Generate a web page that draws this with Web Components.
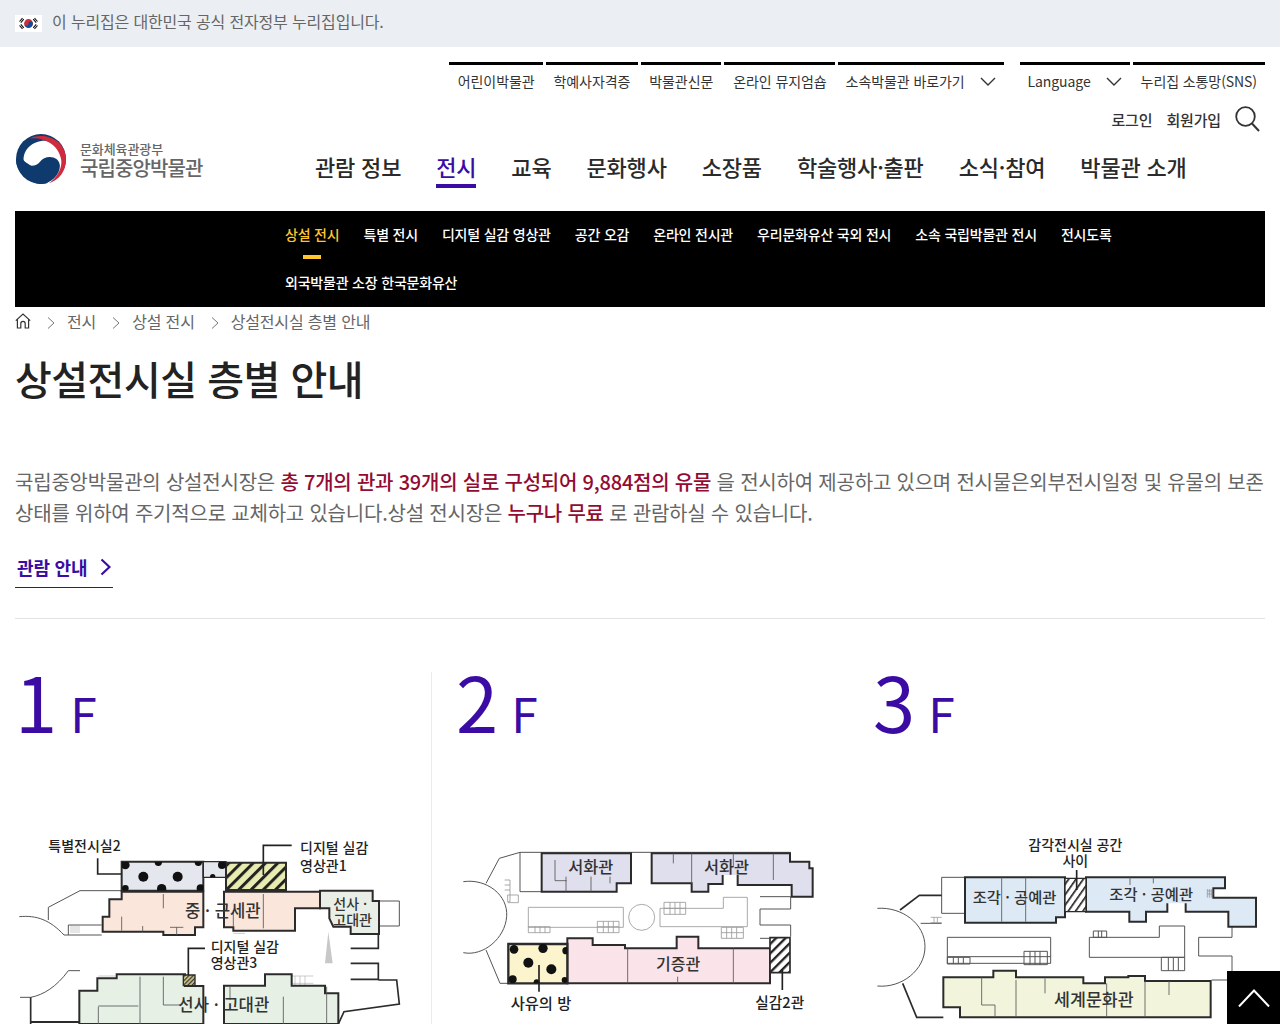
<!DOCTYPE html>
<html lang="ko">
<head>
<meta charset="utf-8">
<title>상설전시실 층별 안내</title>
<style>
  html, body { margin: 0; padding: 0; background: #fff; }
  body { font-family: "Noto Sans CJK KR", "Noto Sans", sans-serif; color: #333; height: 1024px; overflow: hidden; }
</style>
</head>
<body>
<gov-banner>이 누리집은 대한민국 공식 전자정부 누리집입니다.</gov-banner>
<site-header></site-header>
<sub-nav></sub-nav>
<bread-crumb></bread-crumb>
<page-intro></page-intro>
<floor-list></floor-list>
<top-button></top-button>

<script>
const FONT = '"Noto Sans CJK KR", "Noto Sans", sans-serif';
const PURPLE = '#3a0ca3';

class GovBanner extends HTMLElement {
  constructor() {
    super();
    this.attachShadow({ mode: 'open' });
    this.shadowRoot.innerHTML = `
      <style>
        :host { display: flex; align-items: center; gap: 10px; height: 47px; padding: 0 15px; box-sizing: border-box;
          background: #ebeff3; color: #666; font: 16px/1 ${FONT}; letter-spacing: -.16px; }
        svg { display: block; }
        span { padding-bottom: 6px; }
      </style>
      <svg width="27" height="17" viewBox="0 0 27 17">
        <rect width="27" height="17" fill="#fff"/>
        <circle cx="13.5" cy="8.5" r="4.4" fill="#cd2e3a"/>
        <path d="M9.1 8.5a2.2 2.2 0 0 0 4.4 0a2.2 2.2 0 0 1 4.4 0a4.4 4.4 0 0 1-8.8 0z" fill="#0f4c9c"/>
        <g stroke="#111" stroke-width="1.1" fill="none">
          <path d="M4.5 6.5l3-3.4M5.8 7.6l3-3.4"/>
          <path d="M18.2 4.2l3 3.4M19.5 3.1l3 3.4"/>
          <path d="M4.5 10.5l3 3.4M5.8 9.4l3 3.4"/>
          <path d="M18.2 12.8l3-3.4M19.5 13.9l3-3.4"/>
        </g>
      </svg>
      <span><slot></slot></span>`;
  }
}

class SiteHeader extends HTMLElement {
  constructor() {
    super();
    this.attachShadow({ mode: 'open' });
    const chevron = '<svg class="chev" width="16" height="9" viewBox="0 0 16 9"><path d="M1 1l7 7 7-7" fill="none" stroke="#333" stroke-width="1.4"/></svg>';
    const nav = ['관람 정보', '전시', '교육', '문화행사', '소장품', '학술행사·출판', '소식·참여', '박물관 소개'];
    this.shadowRoot.innerHTML = `
      <style>
        :host { display: block; padding: 0 15px; font-family: ${FONT}; color: #333; }
        .util { display: flex; justify-content: flex-end; gap: 16px; padding-top: 15px; }
        .group { display: flex; gap: 3px; }
        .group a { display: flex; align-items: center; gap: 15px; box-sizing: border-box; height: 38px; padding: 0 8px 3px;
          border-top: 3px solid #000; font-size: 14px; letter-spacing: -.09px; white-space: nowrap; }
        .group a.first { padding-left: 9px; }
        .chev { display: block; }
        .member { display: flex; justify-content: flex-end; align-items: center; height: 35px; padding: 3px 5px 0 0; box-sizing: border-box; font-size: 15px; font-weight: 500; letter-spacing: -.15px; gap: 14px; }
        .member svg { display: block; }
        .bar { display: flex; height: 76px; }
        .logo { display: flex; gap: 13px; width: 300px; height: 50px; }
        .logo svg { display: block; flex: none; margin-top: -1px; }
        .logo div { padding-top: 6px; color: #666; font-weight: 500; white-space: nowrap; }
        .logo b { display: block; font-size: 13px; line-height: 15px; font-weight: 500; letter-spacing: -.1px; }
        .logo strong { display: block; font-size: 20px; line-height: 23px; font-weight: 500; letter-spacing: -.9px; }
        nav { display: flex; gap: 35px; }
        nav a { box-sizing: border-box; height: 53px; padding-top: 15px; font-size: 22px; line-height: 32px; font-weight: 500; letter-spacing: -.18px; white-space: nowrap; color: #2a2a2a; }
        nav a.on { color: ${PURPLE}; border-bottom: 4px solid ${PURPLE}; }
      </style>
      <div class="util">
        <div class="group">
          <a class="first">어린이박물관</a><a>학예사자격증</a><a>박물관신문</a><a class="first">온라인 뮤지엄숍</a><a>소속박물관 바로가기 ${chevron}</a>
        </div>
        <div class="group">
          <a>Language ${chevron}</a><a>누리집 소통망(SNS)</a>
        </div>
      </div>
      <div class="member">
        <span>로그인</span><span>회원가입</span>
        <svg width="25" height="26" viewBox="0 0 25 26"><circle cx="10.5" cy="10.5" r="9.3" fill="none" stroke="#333" stroke-width="1.8"/><path d="M17 17.5l7 7.5" stroke="#333" stroke-width="2" fill="none"/></svg>
      </div>
      <div class="bar">
        <div class="logo">
          <svg width="52" height="50" viewBox="0 0 150 148">
            <circle cx="75" cy="74" r="74" fill="#0f3a6d"/>
            <path d="M24 80C20 48 50 20 85 20C120 22 142 55 138 90C134 120 112 138 96 146L70 110Z" fill="#fff"/>
            <path d="M42 13C80-6 150 12 149 78C148 110 130 135 100 146C124 126 140 100 134 72C126 32 84 8 42 13Z" fill="#d02a3e"/>
            <path d="M24 78C34 100 60 98 72 82C86 62 128 62 131 94C131 122 104 146 76 148C50 148 0 120 1 74Z" fill="#0f3a6d"/>
          </svg>
          <div><b>문화체육관광부</b><strong>국립중앙박물관</strong></div>
        </div>
        <nav>${nav.map((t, i) => `<a class="${i === 1 ? 'on' : ''}">${t}</a>`).join('')}</nav>
      </div>`;
  }
}

class SubNav extends HTMLElement {
  constructor() {
    super();
    this.attachShadow({ mode: 'open' });
    const items = ['상설 전시', '특별 전시', '디지털 실감 영상관', '공간 오감', '온라인 전시관', '우리문화유산 국외 전시', '소속 국립박물관 전시', '전시도록', '외국박물관 소장 한국문화유산'];
    this.shadowRoot.innerHTML = `
      <style>
        :host { display: block; margin: 0 15px; background: #000; font-family: ${FONT}; }
        ul { display: flex; flex-wrap: wrap; margin: 0; padding: 0 100px 0 258px; list-style: none; }
        li { position: relative; height: 48px; padding: 0 12px; color: #fff; font-size: 14px; font-weight: 500; letter-spacing: -.2px; line-height: 46px; white-space: nowrap; }
        li.on { color: #ffc72c; }
        li.on::after { content: ""; position: absolute; left: 50%; bottom: 0; width: 18px; height: 4px; margin-left: -9px; background: #ffc72c; }
      </style>
      <ul>${items.map((t, i) => `<li class="${i === 0 ? 'on' : ''}">${t}</li>`).join('')}</ul>`;
  }
}

class BreadCrumb extends HTMLElement {
  constructor() {
    super();
    this.attachShadow({ mode: 'open' });
    const sep = '<svg class="sep" width="8" height="14" viewBox="0 0 8 14"><path d="M1 1.5l6 5.5-6 5.5" fill="none" stroke="#777" stroke-width="1"/></svg>';
    this.shadowRoot.innerHTML = `
      <style>
        :host { display: flex; align-items: center; box-sizing: border-box; height: 30px; padding: 0 15px 2px; color: #666; font: 16px/28px ${FONT}; letter-spacing: -.16px; }
        svg { display: block; flex: none; }
        .sep { margin: 4px 12px 0 16px; }
      </style>
      <svg width="16" height="16" viewBox="0 0 16 16"><path d="M.8 7.6L8 1l7.2 6.6M2.4 6.4V15h3.4v-4.4a2.2 2.2 0 0 1 4.4 0V15h3.4V6.4" fill="none" stroke="#333" stroke-width="1.2"/></svg>
      ${sep}<span>전시</span>${sep}<span>상설 전시</span>${sep}<span>상설전시실 층별 안내</span>`;
  }
}

class PageIntro extends HTMLElement {
  constructor() {
    super();
    this.attachShadow({ mode: 'open' });
    this.shadowRoot.innerHTML = `
      <style>
        :host { display: block; margin: 0 15px; font-family: ${FONT}; border-bottom: 1px solid #e2e2e2; }
        h1 { margin: 0; padding-top: 11px; font-size: 40px; line-height: 60px; font-weight: 500; letter-spacing: -.5px; color: #222; }
        p { margin: 0; padding-top: 58px; font-size: 20px; line-height: 31px; letter-spacing: -.21px; color: #666; }
        strong { color: #930b30; font-weight: 500; letter-spacing: -.22px; }
        a { display: inline-flex; align-items: center; gap: 13px; box-sizing: border-box; width: 98px; height: 40px; margin-top: 20px; padding: 0 0 2px 2px; margin-bottom: 30px;
          border-bottom: 1px solid ${PURPLE}; color: ${PURPLE}; font-size: 18px; font-weight: 700; letter-spacing: -.18px; white-space: nowrap; }
        .wrap { display: block; }
        svg { display: block; flex: none; }
      </style>
      <h1>상설전시실 층별 안내</h1>
      <p>국립중앙박물관의 상설전시장은 <strong>총 7개의 관과 39개의 실로 구성되어 9,884점의 유물</strong> 을 전시하여 제공하고 있으며 전시물은외부전시일정 및 유물의 보존 상태를 위하여 주기적으로 교체하고 있습니다.상설 전시장은 <strong>누구나 무료</strong> 로 관람하실 수 있습니다.</p>
      <span class="wrap"><a>관람 안내 <svg width="11" height="18" viewBox="0 0 11 18"><path d="M1.5 1.5L9.5 9l-8 7.5" fill="none" stroke="${PURPLE}" stroke-width="2.2"/></svg></a></span>`;
  }
}

// floor plans, coordinates follow the reference at 3x
const INK = '#2b2b2b';
const PLANS = {
  1: { box: '45 0 1248 612', body: `
    <defs>
      <pattern id="h1" width="26" height="26" patternUnits="userSpaceOnUse" patternTransform="rotate(45)"><rect width="26" height="26" fill="#e8ecb0"/><rect width="9" height="26" fill="#222"/></pattern>
      <pattern id="h3" width="9" height="9" patternUnits="userSpaceOnUse" patternTransform="rotate(45)"><rect width="9" height="9" fill="#d9cf8e"/><rect width="4" height="9" fill="#333"/></pattern>
      <clipPath id="rooms"><rect x="365" y="125" width="245" height="87"/><rect x="610" y="125" width="68" height="47"/></clipPath>
    </defs>
    <g fill="none" stroke="#555" stroke-width="3">
      <path d="M58 290C110 285 150 300 192 345H305"/><path d="M145 300V262L240 212H365"/><path d="M205 315H305M205 345V315"/>
      <path d="M92 532H60M92 532C130 525 170 500 205 452H240"/>
      <path d="M1137 243H1198V318H1137"/>
    </g>
    <g fill="none" stroke="${INK}" stroke-width="5">
      <path d="M92 532V612M1052 385H1135V342M1052 430H1135V478H1052M1135 480H1190L1198 552L1032 575L1015 612"/>
    </g>
    <g stroke="#999" stroke-width="1.5" fill="none"><path d="M210 318H240M210 324H240M210 330H240M210 336H240"/><path d="M700 340H735"/><path d="M295 468H345M875 468H940M875 490H940M885 468V495M900 468V495M915 468V495"/></g>
    <path d="M985 335L975 430H998Z" fill="#c8c8c8"/>
    <g stroke="${INK}" stroke-width="6" stroke-linejoin="miter">
      <path d="M365 125H610V212H365Z" fill="#e4e7ee"/>
      <path d="M610 125H678V172H610Z" fill="#e4e7ee" stroke-width="4"/>
      <path d="M678 128H858V210H678Z" fill="url(#h1)"/>
      <path d="M365 215H610V322H585V345H490V335H308V290H328V238H365Z" fill="#fbe6db"/>
      <path d="M672 215H960V265H885V332H700V322H672Z" fill="#fbe6db"/>
      <path d="M960 212H1118V243H1137V342H1052V320H1000L988 295V265H960Z" fill="#e9efe6"/>
      <path d="M238 612V512H292V475H350V463H555V498H610V612Z" fill="#e6f0e5"/>
      <path d="M672 612V497H795V463H875V497H975V520H1015V612Z" fill="#e6f0e5"/>
      <path d="M550 465H585V497H550Z" fill="url(#h3)" stroke-width="4"/>
    </g>
    <path d="M92 606H238" stroke="${INK}" stroke-width="6"/>
    <g fill="#111" clip-path="url(#rooms)">
      <circle cx="430" cy="170" r="15"/><circle cx="533" cy="170" r="15"/>
      <circle cx="376" cy="135" r="13"/><circle cx="475" cy="127" r="11"/><circle cx="595" cy="127" r="11"/>
      <circle cx="376" cy="205" r="10"/><circle cx="485" cy="206" r="14"/><circle cx="602" cy="205" r="12"/>
      <circle cx="666" cy="135" r="12"/><circle cx="638" cy="170" r="8"/>
    </g>
    <g fill="none" stroke="#555" stroke-width="2.5">
      <path d="M490 222V265M365 290V332M428 318V335M530 322V345M510 322H550M700 270V322M790 222V325"/>
      <path d="M420 470V612M295 560V612H295M295 558H415M490 470V555H540M690 497V540M850 530V612M980 500V612"/>
    </g>
    <g fill="none" stroke="#222" stroke-width="5"><path d="M293 115V162H365M875 76H790V165M615 385H565V465"/></g>
    <g font-size="42" font-weight="500" fill="#222">
      <text x="145" y="94">특별전시실2</text>
      <text x="900" y="99">디지털 실감</text><text x="900" y="152">영상관1</text>
      <text x="632" y="397">디지털 실감</text><text x="632" y="445">영상관3</text>
    </g>
    <g fill="#333" font-weight="500">
      <text x="555" y="290" font-size="50">중 · 근세관</text>
      <text x="1000" y="268" font-size="42">선사 ·</text><text x="1000" y="315" font-size="42">고대관</text>
      <text x="535" y="572" font-size="50">선사 · 고대관</text>
    </g>` },
  2: { box: '-24 0 1248 612', body: `
    <defs>
      <pattern id="h2" width="20" height="20" patternUnits="userSpaceOnUse" patternTransform="rotate(45)"><rect width="20" height="20" fill="#fff"/><rect width="7" height="20" fill="#222"/></pattern>
      <clipPath id="yellow"><rect x="205" y="372" width="177" height="118"/></clipPath>
    </defs>
    <g fill="none" stroke="#555" stroke-width="3">
      <path d="M70 185C140 175 205 225 200 290C195 355 130 410 70 398"/>
      <path d="M138 190L178 115L240 97H1052M240 97V215H305M138 390L180 490H205M960 230H1052V267H960V315H1052V350M960 355H988"/>
    </g>
    <g fill="none" stroke="#999" stroke-width="2.5">
      <path d="M265 262H550V322H265ZM660 265H850V232H922V320H660Z"/><circle cx="605" cy="292" r="39"/>
      <path d="M265 320H330V338H265ZM472 304H537V338H472ZM672 247H737V283H672ZM844 322H910V355H844Z"/>
      <path d="M285 320V338M300 320V338M315 320V338M490 304V338M505 304V338M520 304V338M690 247V283M705 247V283M720 247V283M860 322V355M875 322V355M890 322V355M844 338H910M472 320H537M672 265H737"/>
      <path d="M194 180H210V245H203V225H235V248H203M194 195H210M194 210H210"/>
    </g>
    <path d="M305 100H573V190H530V215H305Z" fill="#dfdfee" stroke="${INK}" stroke-width="6"/>
    <path d="M635 100H1050V125H1108V145H1118V230H1055V195H893V165H848V192H805V215H755V190H635Z" fill="#dfdfee"/>
    <path d="M848 165V192H805V215H755V190H635V100H1050V125H1108V145H1118V230H1055V195H893V165" fill="none" stroke="${INK}" stroke-width="6"/>
    <g stroke="${INK}" stroke-width="6">
      <path d="M382 380V355H458V375H555V385H710V350H775V385H990V490H382Z" fill="#fbe3ea"/>
      <path d="M205 372H382V490H205Z" fill="#fbf4cd" stroke-width="7"/>
      <path d="M990 353H1050V458H990Z" fill="url(#h2)" stroke-width="5"/>
    </g>
    <g fill="#111" clip-path="url(#yellow)">
      <circle cx="265" cy="428" r="15"/><circle cx="334" cy="448" r="15"/>
      <circle cx="222" cy="388" r="13"/><circle cx="309" cy="385" r="14"/><circle cx="378" cy="392" r="11"/>
      <circle cx="218" cy="478" r="12"/><circle cx="290" cy="487" r="9"/><circle cx="374" cy="480" r="9"/>
    </g>
    <g fill="none" stroke="#555" stroke-width="2.5">
      <path d="M345 120V182H380M378 170V215M453 170V215M510 170V190M700 100V130M755 100V190M880 100V140M1000 100V180"/>
      <path d="M563 385V490M713 470V490M880 385V490"/>
    </g>
    <path d="M297 435V515M1027 450V510" stroke="#222" stroke-width="5" fill="none"/>
    <g fill="#333" font-weight="500">
      <text x="385" y="159" font-size="49">서화관</text>
      <text x="792" y="159" font-size="49">서화관</text>
      <text x="648" y="451" font-size="48">기증관</text>
    </g>
    <g font-weight="500" fill="#222">
      <text x="212" y="568" font-size="46">사유의 방</text>
      <text x="946" y="564" font-size="44">실감2관</text>
    </g>` },
  3: { box: '-36 0 1251 612', body: `
    <defs>
      <pattern id="h4" width="18" height="18" patternUnits="userSpaceOnUse" patternTransform="rotate(35)"><rect width="18" height="18" fill="#fff"/><rect width="5" height="18" fill="#222"/></pattern>
    </defs>
    <g fill="none" stroke="#555" stroke-width="3">
      <path d="M52 265C125 260 195 310 195 380C195 450 125 505 52 498"/>
      <path d="M245 225V172H315M245 225V280H315M182 310H245"/>
      <path d="M262 352H572V430H262V352ZM262 410H572M688 352H898V318H974V412H688Z"/>
      <path d="M262 412H330V432H262ZM492 394H562V434H492ZM904 412H974V452H904ZM700 333H740V352H700Z"/>
      <path d="M280 412V432M295 412V432M310 412V432M510 394V434M525 394V434M540 394V434M925 412V452M940 412V452M955 412V452M715 333V352M725 333V352"/>
      <path d="M1116 320V352H1016V408H1116V455"/><path d="M1055 480H1105"/>
    </g>
    <g fill="none" stroke="${INK}" stroke-width="5">
      <path d="M120 270L178 226H245M128 490L170 592H250"/>
    </g>
    <path d="M315 172H615V292H588V308H315Z" fill="#dde9f4" stroke="${INK}" stroke-width="6"/>
    <path d="M678 172H1095V205H1060V233H1188V320H1105V275H977V250H922V275H858V305H808V275H678Z" fill="#dde9f4"/>
    <path d="M922 250V275H858V305H808V275H678V172H1095V205H1060V233H1188V320H1105V275H977V250" fill="none" stroke="${INK}" stroke-width="6"/>
    <g stroke="${INK}" stroke-width="6">
      <path d="M615 175H678V275H615Z" fill="url(#h4)" stroke-width="4"/>
      <path d="M250 472H400V452H468V472H670V490H735V472H805V468H855V483H1052V592H300V562H250Z" fill="#f2f5dc"/>
    </g>
    <g fill="none" stroke="#555" stroke-width="2.5">
      <path d="M425 172V305M497 172V305M810 172V195M880 172V190M365 472V555H405V592M468 480V592M555 475V520M740 490V592M855 483V592M927 483V525"/>
    </g>
    <g stroke="#888" stroke-width="2"><path d="M1042 207V233M1048 207V233M1054 207V233M1042 213H1060M1042 222H1060"/><path d="M212 292H245M212 308H245M222 292V308M232 292V308"/></g>
    <path d="M650 150V210" stroke="#222" stroke-width="5" fill="none"/>
    <g font-size="42" font-weight="500" fill="#222" text-anchor="middle">
      <text x="646" y="90">감각전시실 공간</text>
      <text x="646" y="138">사이</text>
    </g>
    <g fill="#333" font-weight="500">
      <text x="338" y="248" font-size="46">조각 · 공예관</text>
      <text x="748" y="240" font-size="46">조각 · 공예관</text>
      <text x="582" y="558" font-size="52">세계문화관</text>
    </g>` }
};

class FloorCard extends HTMLElement {
  constructor() {
    super();
    this.attachShadow({ mode: 'open' });
  }
  connectedCallback() {
    const n = this.getAttribute('floor');
    const plan = PLANS[n];
    this.shadowRoot.innerHTML = `
      <style>
        :host { display: block; min-width: 0; font-family: ${FONT}; }
        h2 { display: flex; align-items: baseline; gap: 13px; box-sizing: border-box; height: 148px; margin: 0; padding-left: var(--pad, 0px); color: ${PURPLE}; font-weight: 400; line-height: 1; }
        .num { font-size: 76px; line-height: 56px; }
        .f { font-size: 48px; }
        svg { display: block; width: 100%; font-family: ${FONT}; }
      </style>
      <h2><span class="num">${n}</span><span class="f">F</span></h2>
      <svg viewBox="${plan.box}" preserveAspectRatio="xMinYMin meet">${plan.body}</svg>`;
  }
}

class FloorList extends HTMLElement {
  constructor() {
    super();
    this.attachShadow({ mode: 'open' });
    this.shadowRoot.innerHTML = `
      <style>
        :host { display: grid; grid-template-columns: 417px 416px 417px; margin: 53px 15px 0; }
        floor-card:nth-of-type(1) { border-right: 1px solid #ececec; --pad: 0px; }
        floor-card:nth-of-type(2) { --pad: 24px; }
        floor-card:nth-of-type(3) { --pad: 25px; }
      </style>
      <floor-card floor="1"></floor-card>
      <floor-card floor="2"></floor-card>
      <floor-card floor="3"></floor-card>`;
  }
}

class TopButton extends HTMLElement {
  constructor() {
    super();
    this.attachShadow({ mode: 'open' });
    this.shadowRoot.innerHTML = `
      <style>
        :host { position: fixed; right: 0; bottom: 0; display: flex; align-items: center; justify-content: center; width: 53px; height: 53px; background: #000; }
        svg { display: block; }
      </style>
      <svg width="32" height="18" viewBox="0 0 32 18"><path d="M1 17.5L16 1.5l15 16" fill="none" stroke="#fff" stroke-width="2"/></svg>`;
  }
}

customElements.define('gov-banner', GovBanner);
customElements.define('site-header', SiteHeader);
customElements.define('sub-nav', SubNav);
customElements.define('bread-crumb', BreadCrumb);
customElements.define('page-intro', PageIntro);
customElements.define('floor-card', FloorCard);
customElements.define('floor-list', FloorList);
customElements.define('top-button', TopButton);
</script>
</body>
</html>
